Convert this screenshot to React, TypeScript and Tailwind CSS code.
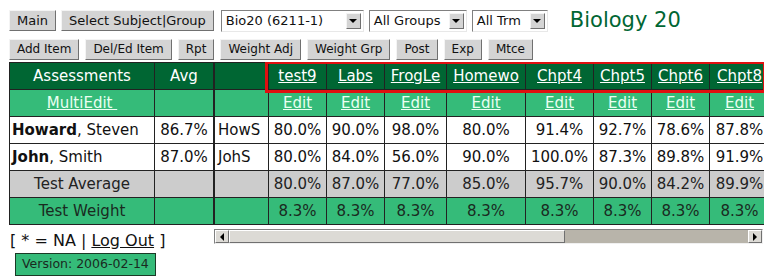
import React from "react";

const font = { fontFamily: '"DejaVu Sans", Verdana, sans-serif' };

const cols = [
	{ name: "test9", w: "w-[58px]", a: "80.0%", b: "80.0%", avg: "80.0%" },
	{ name: "Labs", w: "w-[58px]", a: "90.0%", b: "84.0%", avg: "87.0%" },
	{ name: "FrogLe", w: "w-[62px]", a: "98.0%", b: "56.0%", avg: "77.0%" },
	{ name: "Homewo", w: "w-[79px]", a: "80.0%", b: "90.0%", avg: "85.0%" },
	{ name: "Chpt4", w: "w-[68px]", a: "91.4%", b: "100.0%", avg: "95.7%" },
	{ name: "Chpt5", w: "w-[58px]", a: "92.7%", b: "87.3%", avg: "90.0%" },
	{ name: "Chpt6", w: "w-[58px]", a: "78.6%", b: "89.8%", avg: "84.2%" },
	{ name: "Chpt8", w: "w-[60px]", a: "87.8%", b: "91.9%", avg: "89.9%" },
];

function Btn({ children, small }: { children: React.ReactNode; small?: boolean }) {
	return (
		<button
			className={`h-[21px] ${small ? "px-[7px] text-[12px]" : "px-[7px] text-[13px]"} bg-[#d4d4d4] leading-none text-[#111] border border-t-[#f4f4f4] border-l-[#f4f4f4] border-b-[#707070] border-r-[#707070] whitespace-nowrap`}
		>
			{children}
		</button>
	);
}

function Sel({ label, w }: { label: string; w: string }) {
	return (
		<div className={`${w} h-[22px] flex items-center bg-white border border-t-[#808080] border-l-[#808080] border-b-[#e8e8e8] border-r-[#e8e8e8] text-[13px] text-[#111]`}>
			<span className="flex-1 pl-[4px] whitespace-nowrap overflow-hidden">{label}</span>
			<span className="w-[15px] h-[16px] mr-[2px] bg-[#d4d4d4] border border-t-[#f4f4f4] border-l-[#f4f4f4] border-b-[#707070] border-r-[#707070] flex items-center justify-center">
				<span className="w-0 h-0 border-l-[4px] border-r-[4px] border-t-[4px] border-l-transparent border-r-transparent border-t-black" />
			</span>
		</div>
	);
}

const td = "border border-[#222] p-0 h-[27px] whitespace-nowrap overflow-hidden";

export default function App() {
	return (
		<div className="w-[771px] h-[280px] bg-white pl-[9px] pt-[9px] text-[15px] text-[#111]" style={font}>
			<div className="flex items-center gap-[5px] h-[23px]">
				<Btn>Main</Btn>
				<Btn>Select Subject|Group</Btn>
				<Sel label="Bio20 (6211-1)" w="w-[143px] ml-[2px]" />
				<Sel label="All Groups" w="w-[98px]" />
				<Sel label="All Trm" w="w-[76px]" />
				<span className="ml-[17px] text-[21px] text-[#006633] leading-none">Biology 20</span>
			</div>
			<div className="flex items-center gap-[6px] mt-[6px] h-[22px]">
				<Btn small>Add Item</Btn>
				<Btn small>Del/Ed Item</Btn>
				<Btn small>Rpt</Btn>
				<Btn small>Weight Adj</Btn>
				<Btn small>Weight Grp</Btn>
				<Btn small>Post</Btn>
				<Btn small>Exp</Btn>
				<Btn small>Mtce</Btn>
			</div>
			<div className="flex mt-[2px] items-start">
				<div className="flex flex-col w-[204px]">
					<table className="border-collapse table-fixed w-[204px]">
						<tbody>
							<tr className="bg-[#006633] text-white text-center">
								<td className={`${td} w-[145px]`}>Assessments</td>
								<td className={`${td} w-[59px]`}>Avg</td>
							</tr>
							<tr className="bg-[#35bb79] text-center">
								<td className={td}>
									<span className="underline text-[#eafff2]">MultiEdit&nbsp;</span>
								</td>
								<td className={td}></td>
							</tr>
							<tr className="bg-white">
								<td className={`${td} pl-[2px]`}>
									<b>Howard</b>, Steven
								</td>
								<td className={`${td} text-center`}>86.7%</td>
							</tr>
							<tr className="bg-white">
								<td className={`${td} pl-[2px]`}>
									<b>John</b>, Smith
								</td>
								<td className={`${td} text-center`}>87.0%</td>
							</tr>
							<tr className="bg-[#cccccc] text-center text-[#222]">
								<td className={td}>Test Average</td>
								<td className={td}></td>
							</tr>
							<tr className="bg-[#35bb79] text-center text-[#1a2a1f]">
								<td className={td}>Test Weight</td>
								<td className={td}></td>
							</tr>
						</tbody>
					</table>
					<div className="text-[16px] mt-[6px] leading-[20px] pl-[1px] whitespace-nowrap">
						[ * = NA | <span className="underline">Log Out</span> ]
					</div>
					<div className="mt-[2px] ml-[6px] w-fit px-[6px] h-[23px] flex items-center bg-[#35bb79] border border-[#1a3a26] text-[12.5px] text-[#1a2a1f]">
						Version: 2006-02-14
					</div>
				</div>
				<div className="ml-[1px] w-[550px] flex flex-col">
					<div className="relative w-[550px] overflow-hidden">
						<table className="border-collapse table-fixed w-[555px]">
							<tbody>
								<tr className="bg-[#006633] text-white text-center">
									<td className={`${td} w-[54px]`}></td>
									{cols.map((c) => (
										<td key={c.name} className={`${td} ${c.w}`}>
											<span className="underline">{c.name}</span>
										</td>
									))}
								</tr>
								<tr className="bg-[#35bb79] text-center">
									<td className={td}></td>
									{cols.map((c) => (
										<td key={c.name} className={td}>
											<span className="underline text-[#eafff2]">Edit</span>
										</td>
									))}
								</tr>
								<tr className="bg-white text-center">
									<td className={`${td} text-left pl-[3px]`}>HowS</td>
									{cols.map((c) => (
										<td key={c.name} className={td}>
											{c.a}
										</td>
									))}
								</tr>
								<tr className="bg-white text-center">
									<td className={`${td} text-left pl-[3px]`}>JohS</td>
									{cols.map((c) => (
										<td key={c.name} className={td}>
											{c.b}
										</td>
									))}
								</tr>
								<tr className="bg-[#cccccc] text-center text-[#222]">
									<td className={td}></td>
									{cols.map((c) => (
										<td key={c.name} className={td}>
											{c.avg}
										</td>
									))}
								</tr>
								<tr className="bg-[#35bb79] text-center text-[#1a2a1f]">
									<td className={td}></td>
									{cols.map((c) => (
										<td key={c.name} className={td}>
											8.3%
										</td>
									))}
								</tr>
							</tbody>
						</table>
						<div className="absolute left-[51px] top-[-1px] w-[501px] h-[32px] border-[3px] border-[#e01010]" />
					</div>
					<div className="mt-[4px] w-[549px] h-[15px] flex bg-[#b8b4aa] border border-t-[#808080] border-l-[#808080] border-b-[#f0f0f0] border-r-[#f0f0f0]">
						<div className="w-[14px] h-full bg-[#dcdad5] border border-t-white border-l-white border-b-[#707070] border-r-[#707070] flex items-center justify-center">
							<span className="w-0 h-0 border-t-[4px] border-b-[4px] border-r-[4px] border-t-transparent border-b-transparent border-r-black" />
						</div>
						<div className="w-[336px] h-full bg-[#dcdad5] border border-t-white border-l-white border-b-[#707070] border-r-[#707070]" />
						<div className="flex-1" />
						<div className="w-[14px] h-full bg-[#dcdad5] border border-t-white border-l-white border-b-[#707070] border-r-[#707070] flex items-center justify-center">
							<span className="w-0 h-0 border-t-[4px] border-b-[4px] border-l-[4px] border-t-transparent border-b-transparent border-l-black" />
						</div>
					</div>
				</div>
			</div>
		</div>
	);
}
